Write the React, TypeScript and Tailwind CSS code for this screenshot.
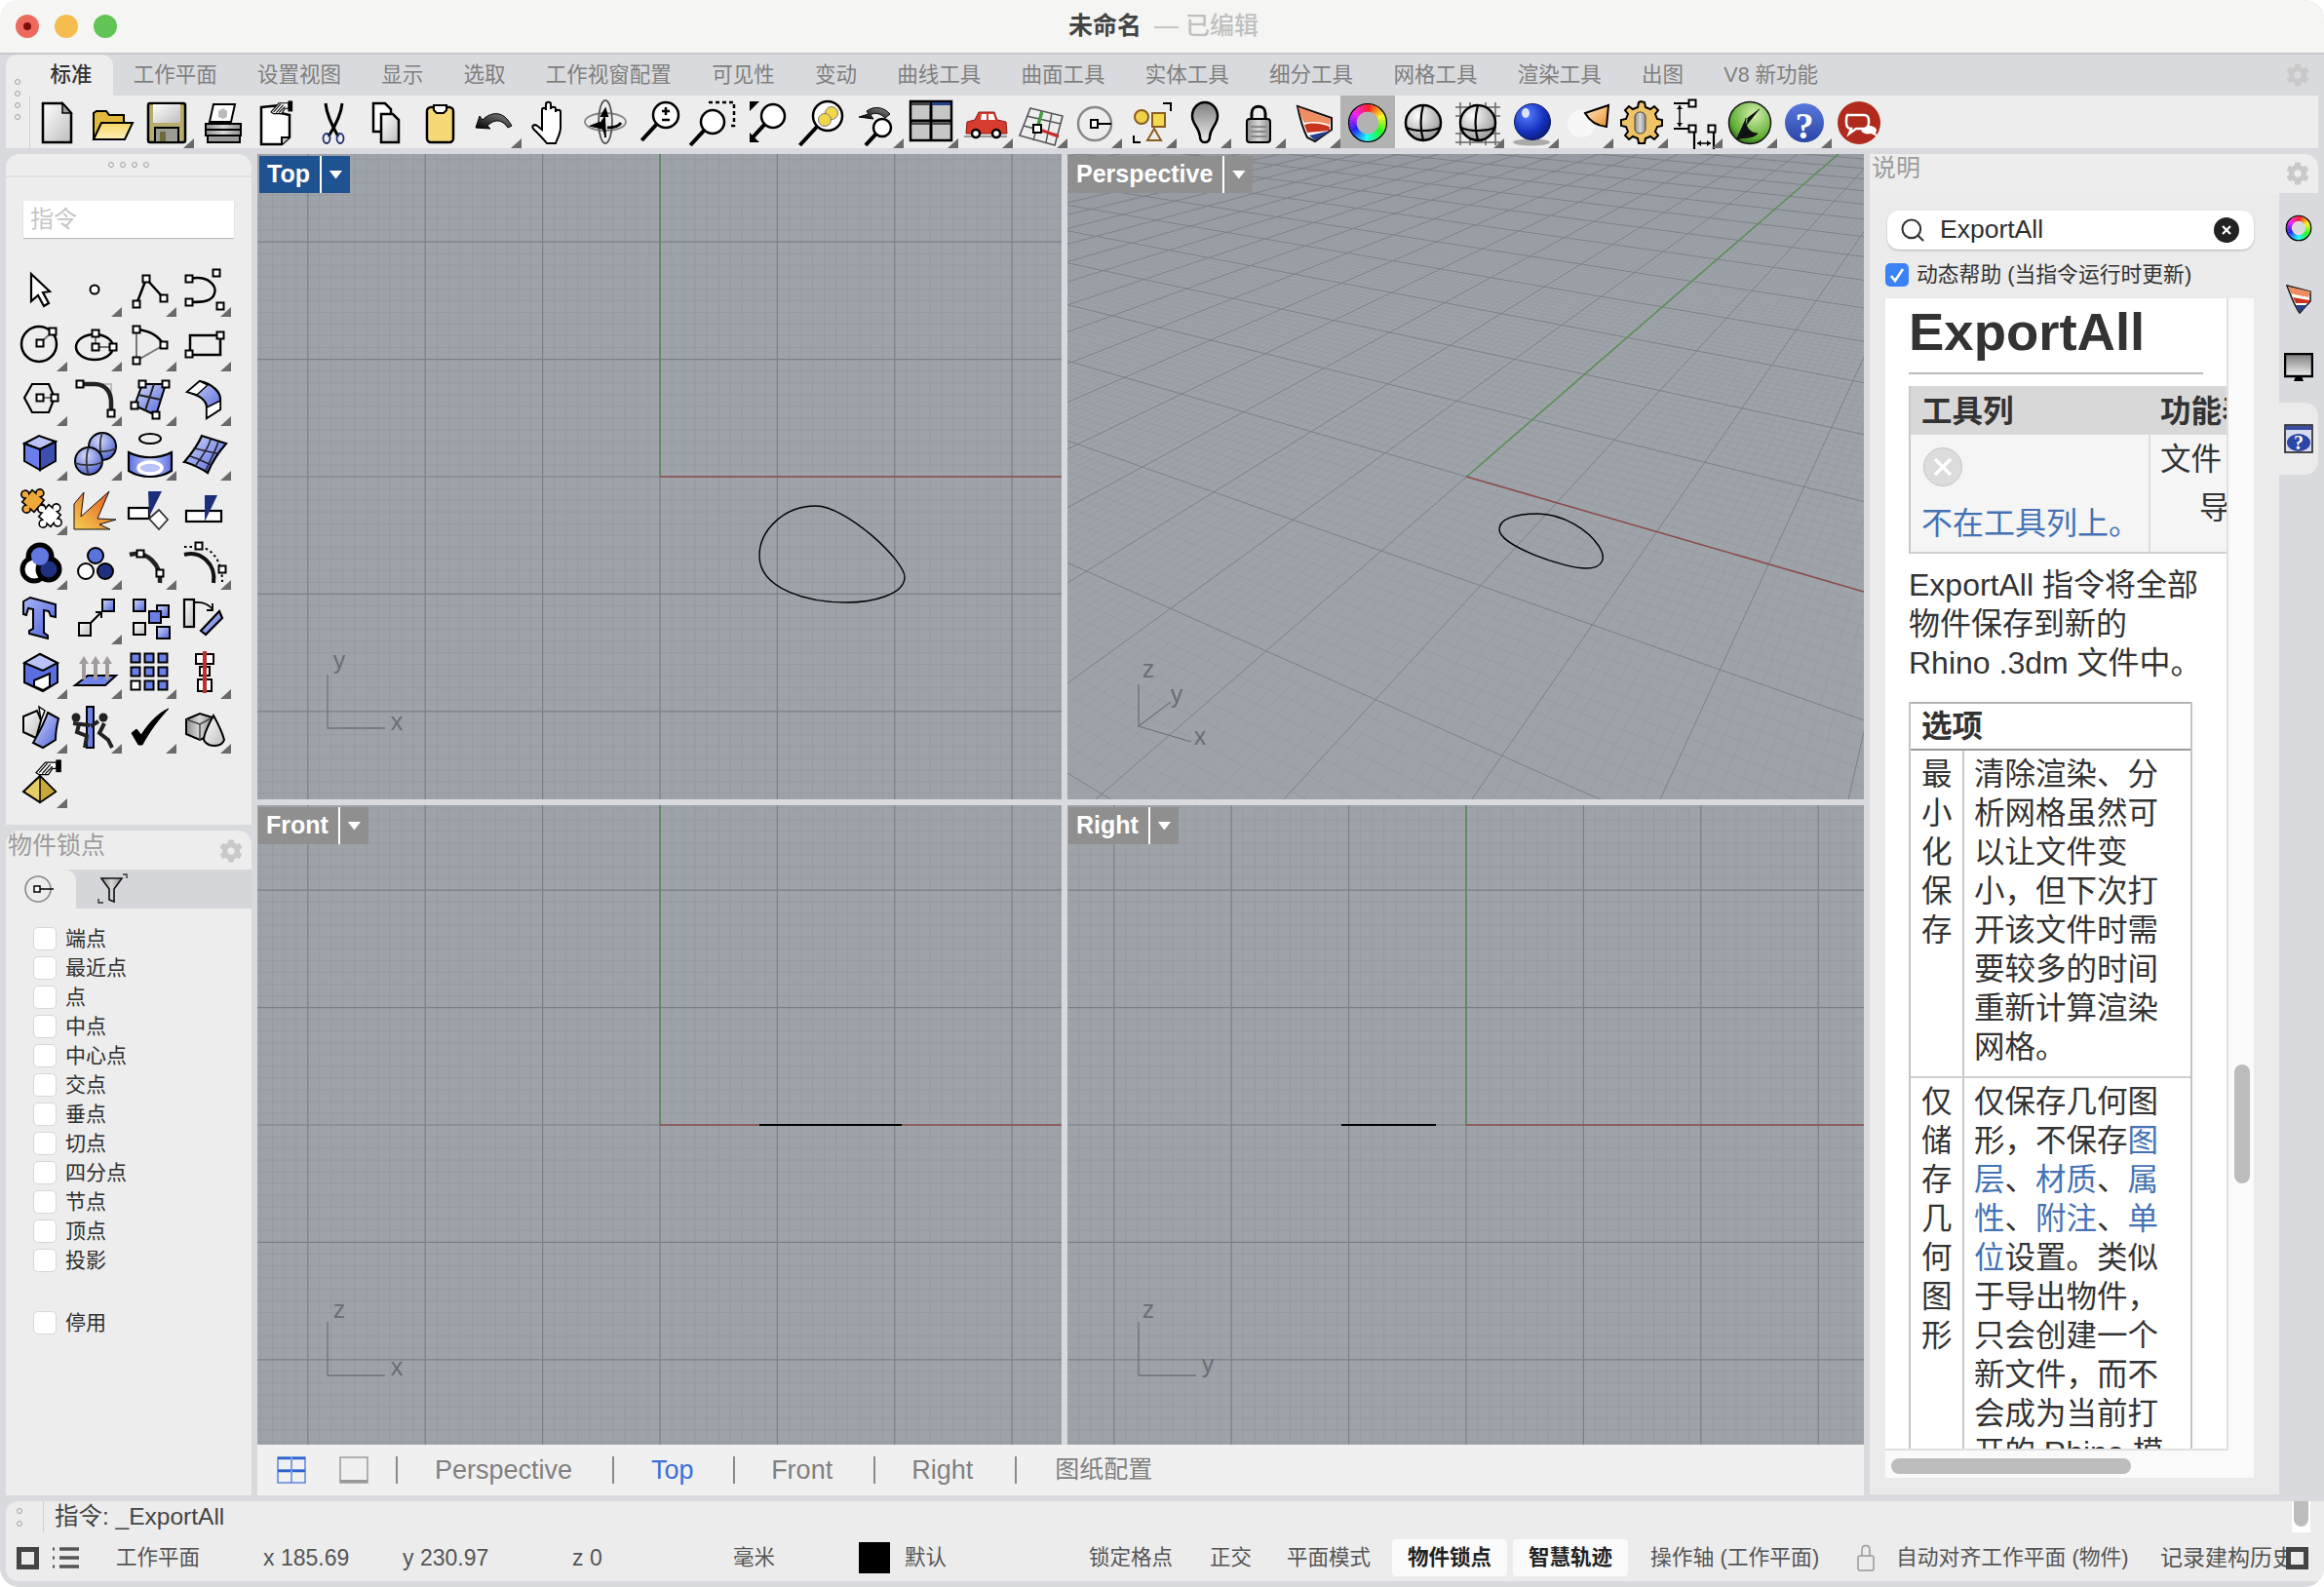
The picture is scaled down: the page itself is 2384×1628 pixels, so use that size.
import React from "react";
import { Search } from "lucide-react";
import { FaCog } from "react-icons/fa";

const S = "#000";
const H = ({ x, y, s = 7 }: { x: number; y: number; s?: number }) => (
  <rect x={x - s / 2} y={y - s / 2} width={s} height={s} fill="#fff" stroke="#000" strokeWidth="2" />
);
const Ico = ({ children, dx = 0 }: { children: React.ReactNode; dx?: number }) => (
  <svg width="48" height="48" viewBox="0 0 48 48" className="block overflow-visible"><g transform={`translate(${dx} 0)`}>{children}</g></svg>
);
const Mag = ({ x = 26, y = 20, r = 10, fill = "#fff" }: { x?: number; y?: number; r?: number; fill?: string }) => (
  <>
    <line x1={x - r * 0.7} y1={y + r * 0.7} x2={x - r * 1.9} y2={y + r * 2} stroke="#000" strokeWidth="4" />
    <circle cx={x} cy={y} r={r} fill={fill} stroke="#000" strokeWidth="2.5" />
  </>
);
const Hand = ({ t = "" }: { t?: string }) => (
  <g transform={t} stroke="#000" fill="#fff" strokeWidth="1.2">
    <path d="M0 12 L9 2 H20 V8 H16 L12 14 H3z" />
    <path d="M3 12 L11 3M6 13 L14 4M9 13 L16 6" fill="none" />
    <rect x="20" y="0" width="4" height="11" fill="#000" />
  </g>
);
const Puz = ({ cx, cy, f }: { cx: number; cy: number; f: string }) => (
  <g transform={`translate(${cx} ${cy}) rotate(40)`}>
    <path
      d="M-8 -8H-3A4 4 0 1 1 3 -8H8V-3A4 4 0 1 1 8 3V8H3A4 4 0 1 1 -3 8H-8V3A4 4 0 1 1 -8 -3Z"
      fill={f}
      stroke="#000"
      strokeWidth="1.6"
    />
  </g>
);
const Wheel = ({ cx, cy, r, w }: { cx: number; cy: number; r: number; w: number }) => {
  const segs = [];
  for (let i = 0; i < 36; i++) {
    const a0 = ((i * 10 - 90) * Math.PI) / 180;
    const a1 = (((i + 1) * 10 - 90 + 1) * Math.PI) / 180;
    segs.push(
      <path
        key={i}
        d={`M${(cx + r * Math.cos(a0)).toFixed(2)} ${(cy + r * Math.sin(a0)).toFixed(2)}L${(cx + r * Math.cos(a1)).toFixed(2)} ${(cy + r * Math.sin(a1)).toFixed(2)}`}
        stroke={`hsl(${i * 10} 95% 55%)`}
        strokeWidth={w}
        fill="none"
      />
    );
  }
  return (
    <>
      {segs}
      <circle cx={cx} cy={cy} r={r + w / 2} fill="none" stroke="#000" strokeWidth="1.2" />
    </>
  );
};
const Ball = () => (
  <>
    <circle cx="25" cy="25" r="18" fill="url(#gS)" stroke={S} strokeWidth="2.5" />
    <path d="M25 7C22 18 22 32 25 43" fill="none" stroke="#000" strokeWidth="2.2" />
    <path d="M8 30C16 34 34 34 42 30" fill="none" stroke="#000" strokeWidth="2.2" />
  </>
);

const topIcons: React.ReactNode[] = [
  <><path d="M9 5h20l9 10v30H9z" fill="url(#gW)" stroke={S} strokeWidth="2.5" /><path d="M29 5v10h9z" fill="#999" stroke={S} strokeWidth="1.5" /></>,
  <><path d="M8 42V15l3-2h10l3 4h15v8" fill="#e2b93a" stroke={S} strokeWidth="2" /><path d="M8 42l8-17h32l-8 17z" fill="url(#gY)" stroke={S} strokeWidth="2" /></>,
  <><rect x="8" y="5" width="38" height="40" rx="2" fill="#b8ad6f" stroke={S} strokeWidth="2.5" /><rect x="13" y="6" width="28" height="19" fill="url(#gW)" /><rect x="15" y="30" width="24" height="15" fill="#9c9c94" stroke={S} strokeWidth="2" /><rect x="20" y="34" width="6" height="10" fill="#6e6a3c" /></>,
  <><path d="M16 6H38L34 24H12z" fill="#fff" stroke={S} strokeWidth="2" /><path d="M21 13l5-3 4 3v6l-4 2-5-2z" fill="#bbb" /><path d="M8 26h36v6H8zM8 32h36v6H8z" fill="url(#gG)" stroke={S} strokeWidth="2" /><rect x="10" y="38" width="33" height="7" fill="#999" stroke={S} strokeWidth="2" /></>,
  <><path d="M9 9l20-2v8l9 2v23l-8 7H9z" fill="#fff" stroke={S} strokeWidth="2.5" /><path d="M30 47v-7h8" fill="#ccc" stroke={S} strokeWidth="2" /><Hand t="translate(19 3) scale(.9)" /></>,
  <><path d="M16 5c1 11 6 22 13 34M33 5C32 16 26 28 19 39" fill="none" stroke="#000" strokeWidth="3" /><ellipse cx="17" cy="41" rx="3.5" ry="5" fill="none" stroke="#1d2d6e" strokeWidth="1.8" /><ellipse cx="31" cy="41" rx="3.5" ry="5" fill="none" stroke="#1d2d6e" strokeWidth="1.8" /></>,
  <><path d="M9 5h12l6 6v23H9z" fill="#fff" stroke={S} strokeWidth="2.5" /><path d="M17 16h12l6 6v23H17z" fill="url(#gW)" stroke={S} strokeWidth="2.5" /></>,
  <><rect x="9" y="9" width="27" height="36" rx="4" fill="#f5d878" stroke={S} strokeWidth="2.5" /><path d="M16 7h13v5l-3 3h-7l-3-3z" fill="#fff" stroke={S} strokeWidth="2" /></>,
  <><path d="M3 30L7 18l3 4c8-8 20-10 28 3l2 3-4 2c-6-9-14-9-21-2l3 3z" fill="url(#gK)" stroke="#000" strokeWidth="1" /></>,
  <><path d="M18 46c-4-5-9-10-14-15-2-3 1-5 4-3l5 4V12c0-3 4-3 4 0V6c0-3 5-3 5 0v5c0-3 5-3 5 0v3c0-3 5-3 5 0v16c0 6-3 10-5 16z" fill="#fff" stroke={S} strokeWidth="2" /></>,
  <><ellipse cx="22" cy="24" rx="21" ry="9" fill="none" stroke="#888" strokeWidth="1.8" /><ellipse cx="22" cy="24" rx="7" ry="22" fill="none" stroke="#555" strokeWidth="1.8" /><path d="M17 26l4-6 1 20M24 18l-2-7-4 7zM8 28l12 3-4-6z" fill="#000" stroke="#000" strokeWidth="2" /><path d="M24 30c8 0 12-2 14-5" fill="none" stroke="#000" strokeWidth="3" /></>,
  <><Mag x={28} y={17} r={13} /><path d="M28 9v8M24 13h8M24 22h8" stroke="#000" strokeWidth="2.5" /></>,
  <><path d="M16 4h26v24h-4" fill="none" stroke="#000" strokeWidth="2.5" strokeDasharray="4 3" /><Mag x={20} y={24} r={12} /></>,
  <><path d="M3 3h10L3 13zM3 45h10L3 35z" fill="#000" /><Mag x={27} y={18} r={12} /></>,
  <><Mag x={26} y={18} r={15} /><circle cx="30" cy="15" r="6.5" fill="#f0d84a" stroke="#777" /><circle cx="23" cy="22" r="6.5" fill="#f0d84a" stroke="#777" /></>,
  <><path d="M2 19l10-3-2-3c8-6 18-4 24 3l-5 4c-5-5-11-6-15-3l3 4z" fill="url(#gK)" stroke="#000" /><Mag x={26} y={30} r={9} /></>,
  <><rect x="3" y="3" width="42" height="40" fill="#c6c6c6" stroke={S} strokeWidth="2.5" /><path d="M24 3v40M3 23h42" stroke="#000" strokeWidth="3" /><rect x="4" y="4" width="19" height="3" fill="#444" /><rect x="25" y="4" width="19" height="3" fill="#23408f" /><rect x="4" y="25" width="19" height="2" fill="#444" /><rect x="25" y="25" width="19" height="2" fill="#444" /></>,
  <><rect x="5" y="38" width="44" height="2" fill="#999" /><path d="M8 24l8-2 4-8h16l3 8 9 2 1 12H7z" fill="#d83c2e" stroke="#8a1c14" /><path d="M23 16h5v6h-6zM30 16h5l2 6h-7z" fill="#fff" /><circle cx="17" cy="36" r="4" fill="#fff" stroke="#000" strokeWidth="2.5" /><circle cx="38" cy="36" r="4" fill="#fff" stroke="#000" strokeWidth="2.5" /></>,
  <><path d="M15 10L48 18 40 48 4 38z" fill="none" stroke="#555" strokeWidth="1.6" /><path d="M11 18l35 8M8 28l34 9M26 13L18 43M37 15l-6 30" stroke="#555" strokeWidth="1.4" /><path d="M22 31l5-17" stroke="#3ea03e" strokeWidth="3" /><path d="M22 31l22 8" stroke="#c82c2c" strokeWidth="3" /><H x={22} y={31} s={8} /></>,
  <><circle cx="21" cy="26" r="17" fill="none" stroke="#888" strokeWidth="2.5" /><rect x="17" y="22" width="7" height="8" fill="#fff" stroke="#000" strokeWidth="2" /><line x1="24" y1="26" x2="38" y2="26" stroke="#000" strokeWidth="2" /></>,
  <><path d="M38 5h8v8" fill="none" stroke="#000" strokeWidth="2" /><path d="M8 38v7h7" fill="none" stroke="#000" strokeWidth="2" /><circle cx="16" cy="19" r="7" fill="#f0d24a" stroke="#8a5d1e" strokeWidth="2" /><rect x="27" y="15" width="13" height="14" fill="#f3d94e" stroke="#8a5d1e" strokeWidth="2" /><path d="M22 43l7-12 7 12z" fill="none" stroke="#8a5d1e" strokeWidth="2" /></>,
  <><path d="M24 4c8 0 13 7 13 14 0 9-7 11-8 21 0 4-2 6-5 6s-5-2-5-6c-1-10-8-12-8-21 0-7 5-14 13-14z" fill="url(#gG2)" stroke={S} strokeWidth="2.5" /></>,
  <><path d="M17 22v-7c0-9 14-9 14 0v7" fill="none" stroke="#000" strokeWidth="3" /><rect x="12" y="21" width="24" height="24" rx="3" fill="url(#gG)" stroke={S} strokeWidth="2" /><path d="M16 29h16M16 34h16M16 39h16" stroke="#888" strokeWidth="2" /></>,
  <><path d="M8 8L43 20V32L26 44 18 40C12 28 10 18 8 8z" fill="#fff" stroke="#111" strokeWidth="2" /><path d="M9 9L42 21 41 27C33 24 23 23 15 25 12 20 10 14 9 9z" fill="#ef8d63" /><path d="M15 27C25 24 33 26 41 29V33L18 35z" fill="#c9341f" /><path d="M20 38L42 33 26 43z" fill="#26408f" /></>,
  <Wheel cx={24} cy={25} r={15.5} w={8} />,
  <Ball />,
  <><path d="M7 4v44M17 4v44M33 4v44M43 4v44M2 9h46M2 18h46M2 36h46M2 45h46" stroke="#666" strokeWidth="1.5" /><Ball /></>,
  <><ellipse cx="24" cy="45" rx="19" ry="3.5" fill="#aaa" /><circle cx="25" cy="24" r="18.5" fill="url(#gBall)" stroke="#0a1a66" /><ellipse cx="18" cy="15" rx="4" ry="5" fill="#fff" opacity=".8" /></>,
  <><circle cx="19" cy="26" r="14" fill="#fff" opacity=".55" /><path d="M23 15L47 7 45 29C36 28 28 24 23 15z" fill="url(#gC)" stroke={S} strokeWidth="2" /></>,
  <><path d="M24 3l4 1 1 5 5 2 4-3 4 4-3 4 2 5 5 1v6l-5 1-2 5 3 4-4 4-4-3-5 2-1 5h-6l-1-5-5-2-4 3-4-4 3-4-2-5-5-1v-6l5-1 2-5-3-4 4-4 4 3 5-2 1-5z" fill="#efc467" stroke={S} strokeWidth="2" /><rect x="18" y="14" width="11" height="22" rx="5" fill="url(#gG)" stroke="#444" /></>,
  <><path d="M2 5h18M2 31h18M23 31v21M43 33v19" stroke="#000" strokeWidth="2.2" /><H x={21} y={5} /><H x={21} y={31} /><H x={41} y={31} /><path d="M8 7v22M26 46h14" stroke="#000" strokeWidth="1.5" /><path d="M8 7l-3 4h6zM8 29l-3-4h6zM26 46l4-3v6zM40 46l-4-3v6z" fill="#000" /></>,
  <><circle cx="24" cy="25" r="21.5" fill="url(#gE)" stroke="#111" strokeWidth="1.5" /><path d="M14 36c6-3 8-12 8-16l12-9M10 42c8-3 16 0 22-6-8 0-14-8-12-16" fill="#111" stroke="#111" /></>,
  <><circle cx="24" cy="25" r="20" fill="url(#gH)" /><text x="24" y="41" textAnchor="middle" fontFamily="Liberation Serif" fontSize="38" fontWeight="700" fill="#fff">?</text></>,
  <><circle cx="24" cy="25" r="22" fill="#b02a1d" /><path d="M12 17h17c4 0 5 3 5 6v2c0 3-2 6-6 6h-7l-7 5 2-5c-4 0-5-3-5-6v-3c0-3 1-5 1-5z" fill="none" stroke="#fff" strokeWidth="2.5" /><path d="M33 28c6 0 9 2 9 5l-1 2 2 4-7-3c-4 1-8 0-10-3z" fill="#fff" /></>,
];
const topDx = [0, -3, -3, 0, 0, 3, 3, 2, 2, 4, 4, 4, 4, 3, 4, 4, 0, -3, -1, 3, 0, 1];
const topTri = [2, 8, 15, 16, 17, 18, 19, 20, 21, 22, 23, 26, 27, 28, 29, 30, 31, 32];

const sideIcons: [React.ReactNode, boolean][] = [
  [<path d="M19 12L38 30 31 31 37 42 32 45 26 34 19 40z" fill="#fff" stroke={S} strokeWidth="2.2" />, false],
  [<circle cx="28" cy="28" r="4.5" fill="#fff" stroke={S} strokeWidth="2" />, true],
  [<><path d="M15 43L25 17 43 37" fill="none" stroke="#000" strokeWidth="2.5" /><H x={25} y={17} /><H x={15} y={43} /><H x={43} y={37} /></>, true],
  [<><path d="M14 17C32 13 42 24 39 32 37 40 28 41 14 41" fill="none" stroke="#000" strokeWidth="2.5" /><H x={13} y={17} /><H x={41} y={11} /><H x={13} y={41} /><H x={45} y={45} /></>, true],
  [<><circle cx="27" cy="28" r="18" fill="none" stroke="#000" strokeWidth="2.5" /><line x1="28" y1="27" x2="41" y2="15" stroke="#777" strokeWidth="2" /><H x={28} y={27} /><H x={41} y={15} /></>, true],
  [<><ellipse cx="28" cy="31" rx="19" ry="13" fill="none" stroke="#000" strokeWidth="2.5" /><path d="M29 17v14h18" fill="none" stroke="#777" strokeWidth="2" /><H x={29} y={17} /><H x={29} y={31} /><H x={47} y={31} /></>, true],
  [<><path d="M15 13v32L43 29" fill="none" stroke="#777" strokeWidth="2" /><path d="M15 13C28 14 38 20 43 29" fill="none" stroke="#000" strokeWidth="2.5" /><H x={15} y={13} /><H x={43} y={29} /><H x={15} y={45} /></>, true],
  [<><rect x="14" y="19" width="31" height="20" fill="none" stroke="#000" strokeWidth="2.5" /><H x={13} y={38} /><H x={45} y={19} /></>, true],
  [<><path d="M12 27L20 13H37L43 27 37 42H20z" fill="none" stroke="#000" strokeWidth="2.2" /><line x1="28" y1="27" x2="43" y2="27" stroke="#777" strokeWidth="2" /><H x={28} y={27} /><H x={43} y={27} /></>, true],
  [<><path d="M13 13H45V43" fill="none" stroke="#aaa" strokeWidth="1.5" /><path d="M13 13H28C40 13 45 22 45 32V43" fill="none" stroke="#222" strokeWidth="4.5" /><H x={13} y={13} /><H x={45} y={43} /></>, true],
  [<><path d="M21 13H45L35 45 13 35z" fill="url(#gB)" stroke={S} strokeWidth="2" /><path d="M17 24L40 29M33 13L24 40" stroke="#222" strokeWidth="2" /><H x={21} y={13} /><H x={45} y={13} /><H x={35} y={45} /><H x={13} y={35} /></>, true],
  [<><path d="M11 21L24 10C38 13 45 22 45 28V39L31 48V37C31 29 22 24 11 21z" fill="url(#gB)" stroke={S} strokeWidth="2.2" /><path d="M11 21L24 10 32 14 21 24z" fill="#fff" stroke={S} strokeWidth="1.5" /><path d="M31 37L45 30V39L31 48z" fill="#fff" stroke={S} strokeWidth="1.5" /></>, true],
  [<><path d="M12 18L27 10 44 16 28 24z" fill="#b9c3f7" stroke={S} strokeWidth="2" /><path d="M12 18L28 24V45L12 36z" fill="#6a7de8" stroke={S} strokeWidth="2" /><path d="M28 24L44 16V36L28 45z" fill="#3c4fb0" stroke={S} strokeWidth="2" /></>, true],
  [<><circle cx="36" cy="21" r="14" fill="url(#gR)" stroke={S} strokeWidth="2" /><path d="M36 7C33 14 33 28 36 35M22 24C30 27 42 27 50 23" fill="none" stroke="#333" strokeWidth="1.8" /><circle cx="22" cy="36" r="14" fill="url(#gR)" stroke={S} strokeWidth="2" /><path d="M22 22C19 29 19 43 22 50M8 38C16 41 28 41 36 37" fill="none" stroke="#333" strokeWidth="1.8" /></>, true],
  [<><ellipse cx="29" cy="13" rx="11" ry="5" fill="none" stroke={S} strokeWidth="2" /><path d="M7 27C20 34 38 34 51 27V46C38 54 20 54 7 46z" fill="url(#gB2)" stroke={S} strokeWidth="2.2" /><ellipse cx="29" cy="43" rx="12" ry="6" fill="#b9c3f7" stroke="#fff" strokeWidth="3.5" /></>, true],
  [<><path d="M8 37C14 30 22 20 26 10L51 18C44 26 36 38 32 48 26 44 14 38 8 37z" fill="url(#gB)" stroke={S} strokeWidth="2.2" /><path d="M17 23C26 24 36 28 44 28M14 31C24 34 30 38 36 40M35 14C32 24 26 32 20 40M43 16C40 26 34 36 30 46" fill="none" stroke="#223" strokeWidth="1.6" /></>, true],
  [<><Puz cx={21} cy={21} f="#efa83a" /><Puz cx={38} cy={36} f="#fff" /></>, true],
  [<path d="M7 50V24L17 12 14 37 43 11 31 39 50 40 33 45 44 50z" fill="url(#gF)" stroke="#111" strokeWidth="1" />, false],
  [<><rect x="7" y="28" width="21" height="11" fill="#fff" stroke={S} strokeWidth="2.2" /><path d="M27 11H41L28 37z" fill="#1c2d7a" /><path d="M28 39L38 30 47 40 38 50z" fill="#fff" stroke="#333" strokeWidth="1.8" /></>, false],
  [<><rect x="10" y="31" width="36" height="11" fill="#fff" stroke={S} strokeWidth="2.2" /><path d="M29 15H42L29 42z" fill="#1c2d7a" /></>, false],
  [<><circle cx="28" cy="22" r="12" fill="#5a72dc" stroke={S} strokeWidth="5" /><circle cx="22" cy="35" r="12" fill="#fff" stroke={S} strokeWidth="5" /><circle cx="37" cy="35" r="11" fill="#1f3080" stroke={S} strokeWidth="5" /><circle cx="28" cy="22" r="9" fill="#6078e0" /></>, true],
  [<><circle cx="29" cy="21" r="8" fill="#5a72dc" stroke={S} strokeWidth="2" /><circle cx="19" cy="37" r="8" fill="#fff" stroke={S} strokeWidth="2" /><circle cx="39" cy="37" r="8" fill="#1f3080" stroke={S} strokeWidth="2" /></>, true],
  [<><path d="M8 20C25 15 41 30 39 49" fill="none" stroke="#222" strokeWidth="4.5" /><H x={19} y={19} /><H x={39} y={39} /></>, true],
  [<><path d="M8 20C25 15 41 30 38 49" fill="none" stroke="#111" strokeWidth="4" /><path d="M8 12H23C36 13 47 26 47 48" fill="none" stroke="#000" strokeWidth="2" strokeDasharray="2.5 3" /><H x={23} y={11} /><H x={47} y={35} /></>, true],
  [<><path d="M11 12L18 8 44 15V28L39 27 37 22 32 21V44L36 47V50L17 45V42L21 40V20L16 19 14 26 11 25Z" fill="url(#gB3)" stroke={S} strokeWidth="2" /></>, false],
  [<><rect x="12" y="34" width="12" height="13" fill="url(#gW)" stroke={S} strokeWidth="2" /><rect x="36" y="10" width="12" height="12" fill="url(#gB)" stroke={S} strokeWidth="2" /><path d="M24 34L35 23M29 23H35V29" fill="none" stroke="#000" strokeWidth="2" /></>, true],
  [<><rect x="12" y="10" width="12" height="12" fill="url(#gB)" stroke={S} strokeWidth="2" /><rect x="36" y="16" width="12" height="12" fill="url(#gB)" stroke={S} strokeWidth="2" /><rect x="28" y="22" width="12" height="12" fill="#6a80e8" stroke={S} strokeWidth="2" /><rect x="12" y="34" width="12" height="12" fill="url(#gW)" stroke={S} strokeWidth="2" /><rect x="36" y="38" width="13" height="12" fill="url(#gB)" stroke={S} strokeWidth="2" /></>, false],
  [<><rect x="8" y="10" width="10" height="28" fill="url(#gW)" stroke={S} strokeWidth="2.2" /><path d="M28 43L47 23 50 30 33 47z" fill="url(#gB)" stroke={S} strokeWidth="2.2" transform="translate(-3 -1)" /><path d="M19 13C27 12 33 15 37 20M37 14V21H31" fill="none" stroke="#000" strokeWidth="1.8" /></>, false],
  [<><path d="M12 19L28 10 46 19 V39 L31 48 12 39z" fill="#5a6ee0" stroke={S} strokeWidth="2" /><path d="M12 19L28 10 46 19 31 27z" fill="#b9c3f7" stroke={S} strokeWidth="2" /><path d="M22 37L38 30V43L31 47 22 43z" fill="#fff" stroke={S} strokeWidth="2" /></>, true],
  [<><path d="M8 42L21 32H50L39 42z" fill="#6f83e8" stroke={S} strokeWidth="2" /><path d="M15 36V20H12L17 12 22 20H19V36zM27 36V20H24L29 12 34 20H31V36zM39 36V20H36L41 12 46 20H43V36z" fill="#a19c9c" /></>, true],
  [<>{[14, 28, 42].map((y) => [14, 28, 42].map((x) => <rect key={`${x}${y}`} x={x - 4.5} y={y - 4.5} width="9" height="9" fill={x === 14 && y === 42 ? "#fff" : "#6a80e8"} stroke={S} strokeWidth="2" />))}</>, true],
  [<><rect x="20" y="10" width="18" height="10" fill="#fff" stroke={S} strokeWidth="2" /><rect x="24" y="23" width="10" height="9" fill="#fff" stroke={S} strokeWidth="2" /><rect x="22" y="36" width="14" height="12" fill="#fff" stroke={S} strokeWidth="2" /><rect x="27" y="7" width="4" height="43" fill="#b8322e" /></>, true],
  [<><path d="M11 18L25 12 29 22 24 40 11 34z" fill="url(#gW)" stroke={S} strokeWidth="2" /><path d="M27 8L33 12 29 22z" fill="#fff" stroke={S} strokeWidth="1.5" /><path d="M36 14L47 20C45 28 44 36 44 42L31 50 21 45C26 36 32 26 36 14z" fill="url(#gB)" stroke={S} strokeWidth="2" /></>, true],
  [<><rect x="20" y="8" width="7" height="42" fill="#6a80e8" stroke={S} strokeWidth="2" /><circle cx="9" cy="19" r="4.5" fill="#222" /><circle cx="37" cy="19" r="4.5" fill="#222" /><path d="M6 25L23 27M12 26L10 34 20 38 18 50M32 23L24 28M38 25L33 35 42 42 46 50" fill="none" stroke="#222" strokeWidth="4" /></>, true],
  [<path d="M10 35L15 31 20 37C27 25 38 14 48 10 38 20 28 34 21 47H17z" fill="#000" stroke="#000" strokeWidth="1" />, true],
  [<><path d="M10 21L24 15 37 19V36L24 42 10 36z" fill="url(#gG)" stroke={S} strokeWidth="2" /><path d="M10 21L24 26 37 19M24 26V42" fill="none" stroke="#444" strokeWidth="1.5" /><path d="M38 17C32 28 28 38 28 42 32 50 46 50 49 42 47 34 43 26 38 17z" fill="url(#gW)" stroke={S} strokeWidth="2" /></>, true],
  [<><Hand t="translate(24 7) scale(1.05)" /><path d="M28 23L44 39 28 50 11 39z" fill="#e8cc68" stroke={S} strokeWidth="2" /><path d="M28 23V50L44 39z" fill="#c9a83a" stroke={S} strokeWidth="1.5" /></>, true],
];

const snaps = ["端点", "最近点", "点", "中点", "中心点", "交点", "垂点", "切点", "四分点", "节点", "顶点", "投影"];

const Tri = () => (
  <span className="absolute right-0 bottom-0 block h-[10px] w-[11px] bg-[#6a6a6a] [clip-path:polygon(100%_0,100%_100%,0_100%)]" />
);
const Check = ({ label }: { label: string }) => (
  <div className="flex h-[30px] items-center text-[21px] text-[#2e2e2e]">
    <span className="mr-[9px] block h-[24px] w-[24px] rounded-[5px] border border-[#d6d6d6] bg-white" />
    {label}
  </div>
);
const Gear = () => <FaCog size={24} color="#c9c9c9" />;

function Ortho({ x, y, w, h, ox, oy, greenTo, redFrom, redTo }: { x: number; y: number; w: number; h: number; ox: number; oy: number; greenTo: number; redFrom: number; redTo: number }) {
  const st = 12.04;
  let minor = "";
  let major = "";
  for (let i = -80; i <= 80; i++) {
    const px = ox + i * st;
    const py = oy + i * st;
    const m = i % 10 === 0;
    if (px >= x && px <= x + w) {
      const s = `M${px.toFixed(1)} ${y}V${y + h}`;
      if (m) major += s; else minor += s;
    }
    if (py >= y && py <= y + h) {
      const s = `M${x} ${py.toFixed(1)}H${x + w}`;
      if (m) major += s; else minor += s;
    }
  }
  return (
    <>
      <path d={minor} stroke="#969ba1" strokeWidth="1" fill="none" />
      <path d={major} stroke="#7b8086" strokeWidth="1.2" fill="none" />
      <line x1={ox} y1={y} x2={ox} y2={greenTo} stroke="#4f8a4f" strokeWidth="1.3" />
      <line x1={redFrom} y1={oy} x2={redTo} y2={oy} stroke="#8f4c4c" strokeWidth="1.6" />
    </>
  );
}

function perspective() {
  const O = [1504.5, 489];
  const VR = [-250, -20];
  const VG = [2090, -20];
  const k = 0.05;
  const m = 0.13;
  const P = (u: number, v: number) => {
    const w = 1 - k * u + m * v;
    return [((O[0] - u * k * VR[0] + v * m * VG[0]) / w).toFixed(1), ((O[1] - u * k * VR[1] + v * m * VG[1]) / w).toFixed(1)];
  };
  let minor = "";
  let major = "";
  for (let i = -600; i <= 195; i++) {
    const u = i / 10;
    const v0 = (0.05 - 1 + k * u) / m;
    const a = P(u, v0);
    const b = P(u, 200);
    const s = `M${a[0]} ${a[1]}L${b[0]} ${b[1]}`;
    if (i % 10 === 0) major += s; else minor += s;
  }
  for (let i = -500; i <= 500; i++) {
    const v = i / 10;
    const u1 = (1 + m * v - 0.05) / k;
    const a = P(-300, v);
    const b = P(u1, v);
    const s = `M${a[0]} ${a[1]}L${b[0]} ${b[1]}`;
    if (i % 10 === 0) major += s; else minor += s;
  }
  return { minor, major };
}

const Tag = ({ label, active }: { label: string; active?: boolean }) => (
  <div className={active ? "absolute top-[2px] left-[2px] flex h-[38px] items-center bg-[#1f5291] text-[25px] font-bold text-white" : "absolute top-[2px] left-[1px] flex h-[38px] items-center bg-[#8f8f8f] text-[25px] font-bold text-white"}>
    <span className="pr-[10px] pl-[8px]">{label}</span>
    <span className="flex h-[38px] w-[31px] items-center justify-center border-l-2 border-white">
      <span className="block h-[9px] w-[14px] bg-white [clip-path:polygon(0_0,100%_0,50%_100%)]" />
    </span>
  </div>
);

const AxisL = ({ x, y, lx, ly, l1, l2 }: { x: number; y: number; lx: [number, number]; ly: [number, number]; l1: string; l2: string }) => (
  <>
    <path d={`M${x} ${y - 55}V${y}H${x + 59}`} fill="none" stroke="#6e7277" strokeWidth="1.3" />
    <text x={lx[0]} y={lx[1]} fontSize="25" fill="#6a6e73" textAnchor="middle" fontFamily="Liberation Sans">{l1}</text>
    <text x={ly[0]} y={ly[1]} fontSize="25" fill="#6a6e73" textAnchor="middle" fontFamily="Liberation Sans">{l2}</text>
  </>
);

export default function App() {
  const p = perspective();
  return (
    <div className="h-[1628px] w-[2384px] overflow-hidden bg-white [font-family:'Liberation_Sans','Noto_Sans_CJK_SC',sans-serif]">
      <svg width="0" height="0" className="absolute">
        <defs>
          <linearGradient id="gW" x1="0" y1="0" x2="1" y2="1"><stop offset="0" stopColor="#fff" /><stop offset="1" stopColor="#bdbdbd" /></linearGradient>
          <linearGradient id="gY" x1="0" y1="0" x2="0" y2="1"><stop offset="0" stopColor="#f6d466" /><stop offset="1" stopColor="#fff0b8" /></linearGradient>
          <linearGradient id="gG" x1="0" y1="0" x2="1" y2="0"><stop offset="0" stopColor="#8c8c8c" /><stop offset=".5" stopColor="#d8d8d8" /><stop offset="1" stopColor="#8c8c8c" /></linearGradient>
          <linearGradient id="gG2" x1="0" y1="0" x2="0" y2="1"><stop offset="0" stopColor="#7c7c7c" /><stop offset="1" stopColor="#f0f0f0" /></linearGradient>
          <linearGradient id="gK" x1="0" y1="1" x2="1" y2="0"><stop offset="0" stopColor="#000" /><stop offset="1" stopColor="#888" /></linearGradient>
          <linearGradient id="gB" x1="0" y1="0" x2="1" y2="1"><stop offset="0" stopColor="#d4daf9" /><stop offset="1" stopColor="#4d62da" /></linearGradient>
          <linearGradient id="gB2" x1="0" y1="0" x2="1" y2="0"><stop offset="0" stopColor="#5e72e4" /><stop offset=".5" stopColor="#c5cdf8" /><stop offset="1" stopColor="#5e72e4" /></linearGradient>
          <linearGradient id="gB3" x1="0" y1="0" x2="1" y2="1"><stop offset="0" stopColor="#a8b5f7" /><stop offset="1" stopColor="#4a5fd8" /></linearGradient>
          <radialGradient id="gR" cx=".4" cy=".3" r=".8"><stop offset="0" stopColor="#d6dcfa" /><stop offset="1" stopColor="#3e54c8" /></radialGradient>
          <linearGradient id="gF" x1="0" y1="1" x2="1" y2="0"><stop offset="0" stopColor="#f6cf52" /><stop offset="1" stopColor="#e0501c" /></linearGradient>
          <radialGradient id="gS" cx=".35" cy=".3" r=".8"><stop offset="0" stopColor="#fff" /><stop offset="1" stopColor="#8f8f8f" /></radialGradient>
          <radialGradient id="gBall" cx=".35" cy=".3" r=".8"><stop offset="0" stopColor="#5a80ff" /><stop offset=".6" stopColor="#1632c0" /><stop offset="1" stopColor="#0a1866" /></radialGradient>
          <linearGradient id="gC" x1="0" y1="0" x2="1" y2="1"><stop offset="0" stopColor="#fff1cf" /><stop offset="1" stopColor="#ec8c28" /></linearGradient>
          <radialGradient id="gE" cx=".6" cy=".3" r=".8"><stop offset="0" stopColor="#d6f0b0" /><stop offset=".7" stopColor="#5fae35" /><stop offset="1" stopColor="#1c4a10" /></radialGradient>
          <linearGradient id="gH" x1="0" y1="0" x2="0" y2="1"><stop offset="0" stopColor="#5a78dc" /><stop offset="1" stopColor="#2a46a6" /></linearGradient>
        </defs>
      </svg>
      <div className="flex h-[1628px] w-[2384px] flex-col overflow-hidden rounded-[20px] bg-[#d9dade]">
        {/* title */}
        <div className="flex h-[56px] shrink-0 items-center border-b-2 border-[#c9c9c9] bg-[#f5f5f3] pl-[16px]">
          <span className="relative mr-[16px] block h-[24px] w-[24px] rounded-full bg-[#ee6a5f]">
            <span className="absolute top-[8px] left-[8px] block h-[8px] w-[8px] rounded-full bg-[#7a0f0a]" />
          </span>
          <span className="mr-[16px] block h-[24px] w-[24px] rounded-full bg-[#f5bd4f]" />
          <span className="block h-[24px] w-[24px] rounded-full bg-[#61c454]" />
          <span className="ml-[976px] text-[25px] font-bold text-[#444]">未命名</span>
          <span className="ml-[13px] text-[25px] font-medium text-[#c0c0c0]">— 已编辑</span>
        </div>
        {/* toolbar */}
        <div className="flex h-[96px] shrink-0 pl-[6px]">
          <div className="flex w-[25px] flex-col items-center gap-[6px] rounded-tl-[12px] border-r border-[#d0d0d0] bg-[#ededed] pt-[25px]">
            {[0, 1, 2, 3].map((i) => (
              <span key={i} className="block h-[6px] w-[6px] rounded-full border border-[#a0a0a0]" />
            ))}
          </div>
          <div className="flex min-w-0 flex-1 flex-col pr-[6px]">
            <div className="relative flex h-[42px] items-center text-[21.5px] text-[#7f7f7f]">
              <span className="-ml-[1px] flex h-[42px] w-[86px] items-center justify-center rounded-tr-[12px] bg-[#ededed] font-medium text-[#333]">标准</span>
              {["工作平面", "设置视图", "显示", "选取", "工作视窗配置", "可见性", "变动", "曲线工具", "曲面工具", "实体工具", "细分工具", "网格工具", "渲染工具", "出图", "V8 新功能"].map((t) => (
                <span key={t} className="px-[20.65px] whitespace-nowrap">{t}</span>
              ))}
              <span className="ml-auto mr-[9px] flex"><Gear /></span>
            </div>
            <div className="flex h-[54px] bg-[#ededed]">
              {topIcons.map((ic, i) => (
                <div key={i} className={i === 24 ? "relative flex h-[54px] w-[56px] items-center justify-center bg-[#b2b2b2]" : "relative flex h-[54px] w-[56px] items-center justify-center"}>
                  <Ico dx={topDx[i] ?? 0}>{ic}</Ico>
                  {topTri.includes(i) && <Tri />}
                </div>
              ))}
            </div>
          </div>
        </div>
        {/* main */}
        <div className="mt-[6px] flex h-[1376px] shrink-0 pl-[6px]">
          {/* left */}
          <div className="flex w-[252px] shrink-0 flex-col">
            <div className="h-[688px] rounded-t-[14px] bg-[#ededed]">
              <div className="flex h-[24px] items-center justify-center gap-[6px] border-b-2 border-[#e0e0e0]">
                {[0, 1, 2, 3].map((i) => (
                  <span key={i} className="block h-[6px] w-[6px] rounded-full border border-[#a0a0a0]" />
                ))}
              </div>
              <div className="mx-[18px] mt-[24px] flex h-[38px] items-center bg-white pl-[7px] text-[24px] text-[#c6c6c6] shadow-[0_1px_1px_#bbb]">指令</div>
              <div className="mt-[25px] ml-[7px] grid grid-cols-[repeat(4,56px)] auto-rows-[56px]">
                {sideIcons.map(([ic, t], i) => (
                  <div key={i} className="relative">
                    <div className="absolute top-0 left-0"><Ico>{ic}</Ico></div>
                    {t && <Tri />}
                  </div>
                ))}
              </div>
            </div>
            <div className="mt-[6px] flex h-[682px] flex-col rounded-t-[14px] bg-[#ededed]">
              <div className="flex h-[40px] shrink-0 items-start justify-between pr-[9px] pl-[2px] text-[25px] leading-[30px] text-[#9c9c9c]">
                <span>物件锁点</span>
                <span className="mt-[9px]"><Gear /></span>
              </div>
              <div className="flex h-[40px] shrink-0 bg-[#d5d6da]">
                <div className="flex w-[72px] items-center justify-center rounded-tr-[12px] bg-[#ededed] pr-[2px]">
                  <svg width="34" height="34" viewBox="0 0 34 34"><circle cx="15" cy="17" r="13" fill="none" stroke="#888" strokeWidth="1.6" /><rect x="11" y="14" width="6" height="6" fill="#fff" stroke="#000" strokeWidth="1.5" /><line x1="17" y1="17" x2="31" y2="17" stroke="#000" strokeWidth="1.5" /></svg>
                </div>
                <div className="ml-[20px] flex items-center">
                  <svg width="34" height="34" viewBox="0 0 34 34"><path d="M28 2h4v4M3 27v4h5" fill="none" stroke="#333" strokeWidth="1.4" /><path d="M6 6H27L19 17V30L14 28V17z" fill="url(#gG)" stroke="#111" strokeWidth="1.6" /></svg>
                </div>
              </div>
              <div className="pt-[16px] pl-[28px]">
                <div className="flex flex-col">
                  {snaps.map((s) => <Check key={s} label={s} />)}
                </div>
                <div className="mt-[34px]"><Check label="停用" /></div>
              </div>
            </div>
          </div>
          {/* center */}
          <div className="ml-[6px] flex w-[1648px] shrink-0 flex-col">
            <div className="grid h-[1324px] grid-cols-[825px_817px] grid-rows-[662px_656px] gap-[6px]">
              <div className="relative overflow-hidden bg-[#9ea3aa]">
                <svg width="825" height="662" viewBox="264 158 825 662" className="absolute inset-0">
                  <Ortho x={264} y={158} w={825} h={662} ox={677} oy={489} greenTo={489} redFrom={677} redTo={1089} />
                  <path d="M837 519C868 519 928 575 928 592C928 610 895 618 868 618C830 618 779 605 779 570C779 545 803 519 837 519Z" fill="none" stroke="#000" strokeWidth="1.4" />
                  <AxisL x={336} y={747} lx={[348, 686]} ly={[407, 749]} l1="y" l2="x" />
                </svg>
                <Tag label="Top" active />
              </div>
              <div className="relative overflow-hidden bg-[#9ea3aa]">
                <svg width="817" height="662" viewBox="1095 158 817 662" className="absolute inset-0">
                  <path d={p.minor} stroke="#959aa1" strokeWidth=".7" fill="none" />
                  <path d={p.major} stroke="#7b8086" strokeWidth="1" fill="none" />
                  <line x1="1504.5" y1="489" x2="1886" y2="158" stroke="#5b9058" strokeWidth="1.6" />
                  <line x1="1504.5" y1="489" x2="1912" y2="607" stroke="#8f4c4c" strokeWidth="1.6" />
                  <path d="M1538 543C1538 532 1555 527 1577 527C1605 527 1630 545 1640 560C1648 572 1645 583 1627 583C1605 583 1538 560 1538 543Z" fill="none" stroke="#000" strokeWidth="1.4" />
                  <path d="M1168 702V745L1201 720M1168 745L1222 761" fill="none" stroke="#6e7277" strokeWidth="1.3" />
                  <text x="1178" y="695" fontSize="25" fill="#6a6e73" textAnchor="middle" fontFamily="Liberation Sans">z</text>
                  <text x="1207" y="721" fontSize="25" fill="#6a6e73" textAnchor="middle" fontFamily="Liberation Sans">y</text>
                  <text x="1231" y="764" fontSize="25" fill="#6a6e73" textAnchor="middle" fontFamily="Liberation Sans">x</text>
                </svg>
                <Tag label="Perspective" />
              </div>
              <div className="relative overflow-hidden bg-[#9ea3aa]">
                <svg width="825" height="656" viewBox="264 826 825 656" className="absolute inset-0">
                  <Ortho x={264} y={826} w={825} h={656} ox={677} oy={1154} greenTo={1154} redFrom={677} redTo={1089} />
                  <line x1="779" y1="1154" x2="925" y2="1154" stroke="#000" strokeWidth="2" />
                  <AxisL x={336} y={1411} lx={[348, 1352]} ly={[407, 1411]} l1="z" l2="x" />
                </svg>
                <Tag label="Front" />
              </div>
              <div className="relative overflow-hidden bg-[#9ea3aa]">
                <svg width="817" height="656" viewBox="1095 826 817 656" className="absolute inset-0">
                  <Ortho x={1095} y={826} w={817} h={656} ox={1504} oy={1154} greenTo={1154} redFrom={1504} redTo={1912} />
                  <line x1="1376" y1="1154" x2="1473" y2="1154" stroke="#000" strokeWidth="2" />
                  <AxisL x={1168} y={1411} lx={[1178, 1352]} ly={[1239, 1408]} l1="z" l2="y" />
                </svg>
                <Tag label="Right" />
              </div>
            </div>
            <div className="flex h-[52px] shrink-0 items-center bg-[#f0f0f0] pl-[20px] text-[27px] text-[#808080]">
              <svg width="30" height="28" viewBox="0 0 30 28"><rect x="1" y="1" width="28" height="26" fill="none" stroke="#5b86dc" strokeWidth="1.5" /><path d="M15 1v26M1 14h28" stroke="#5b86dc" strokeWidth="1.5" /><path d="M1 2h28M1 15h28" stroke="#2e62cc" strokeWidth="2.5" strokeDasharray="13 2" /></svg>
              <svg width="30" height="28" viewBox="0 0 30 28" className="ml-[34px]"><rect x="1" y="1" width="28" height="26" fill="none" stroke="#9a9a9a" strokeWidth="1.5" /><rect x="1" y="24" width="28" height="3" fill="#999" /></svg>
              <span className="ml-[28px] h-[28px] w-[2px] bg-[#8a8a8a]" />
              <span className="pr-[41px] pl-[38px]">Perspective</span>
              <span className="h-[28px] w-[2px] bg-[#8a8a8a]" />
              <span className="pr-[40.5px] pl-[38px] text-[#3b6fd8]">Top</span>
              <span className="h-[28px] w-[2px] bg-[#8a8a8a]" />
              <span className="pr-[42px] pl-[37px]">Front</span>
              <span className="h-[28px] w-[2px] bg-[#8a8a8a]" />
              <span className="pr-[43px] pl-[37px]">Right</span>
              <span className="h-[28px] w-[2px] bg-[#8a8a8a]" />
              <span className="pl-[39px] text-[25px]">图纸配置</span>
            </div>
          </div>
          {/* right */}
          <div className="ml-[6px] flex w-[466px] shrink-0 flex-col">
            <div className="mr-[6px] flex h-[40px] shrink-0 items-start justify-between rounded-tr-[14px] bg-[#ededed] pr-[9px] pl-[2px] text-[25px] leading-[28px] text-[#9c9c9c]">
              <span>说明</span>
              <span className="mt-[8px]"><Gear /></span>
            </div>
            <div className="flex min-h-0 flex-1">
              <div className="flex h-[1335px] w-[420px] shrink-0 flex-col bg-[#ebebeb] pt-[18px] pl-[16px]">
                <div className="ml-[2px] flex h-[40px] w-[376px] shrink-0 items-center rounded-[12px] bg-white pr-[15px] pl-[12px] text-[26.5px] text-[#2e2e2e] shadow-[0_1px_2px_#b5b5b5]">
                  <Search size={28} strokeWidth={1.8} color="#333" />
                  <span className="ml-[14px] flex-1">ExportAll</span>
                  <span className="flex h-[26px] w-[26px] items-center justify-center rounded-full bg-[#222]">
                    <svg width="12" height="12" viewBox="0 0 12 12"><path d="M2 2l8 8M10 2l-8 8" stroke="#fff" strokeWidth="2.2" /></svg>
                  </span>
                </div>
                <div className="mt-[14px] flex h-[24px] shrink-0 items-center text-[21.8px] text-[#333]">
                  <span className="mr-[8px] flex h-[24px] w-[24px] items-center justify-center rounded-[5px] bg-[#3b82f6]">
                    <svg width="18" height="18" viewBox="0 0 18 18"><path d="M3 10l4 5 8-12" fill="none" stroke="#fff" strokeWidth="2.6" /></svg>
                  </span>
                  动态帮助 (当指令运行时更新)
                </div>
                <div className="mt-[12px] flex h-[1210px] w-[378px] shrink-0 flex-col">
                  <div className="flex h-[1182px] shrink-0">
                    <div className="w-[350px] shrink-0 overflow-hidden border-b-2 border-[#e0e0e0] bg-white pl-[24px] text-[31.5px] leading-[40px] text-[#333]">
                      <div className="h-[78px] w-[302px] border-b-2 border-[#b8b8b8] pt-[5px] text-[54.5px] leading-[60px] font-bold">ExportAll</div>
                      <div className="mt-[12px] w-[520px] border-l-2 border-[#c8c8c8]">
                        <div className="flex h-[50px] items-center bg-[#d8d8d8] pt-[2px] font-bold">
                          <span className="w-[256px] shrink-0 pl-[11px]">工具列</span>
                          <span>功能表</span>
                        </div>
                        <div className="flex h-[122px] border-b-2 border-[#d0d0d0] bg-[#f5f5f5]">
                          <div className="w-[246px] shrink-0 border-r-2 border-[#dcdcdc] pt-[13px] pl-[13px]">
                            <span className="flex h-[40px] w-[40px] items-center justify-center rounded-full border border-[#c4c4c4] bg-[#dcdcdc]">
                              <svg width="22" height="22" viewBox="0 0 22 22"><path d="M3 3l16 16M19 3L3 19" stroke="#fff" strokeWidth="3.4" /></svg>
                            </span>
                            <div className="mt-[18px] -ml-[2px] whitespace-nowrap text-[32px] text-[#4472b4]">不在工具列上。</div>
                          </div>
                          <div className="pl-[10px]">
                            <div className="pt-[5px]">文件</div>
                            <div className="pt-[10px] pl-[40px]">导出</div>
                          </div>
                        </div>
                      </div>
                      <p className="mt-[12px] w-[304px] text-[32px]">ExportAll 指令将全部物件保存到新的Rhino .3dm 文件中。</p>
                      <div className="mt-[20px] w-[291px] border-x-2 border-[#c4c4c4]">
                        <div className="flex h-[50px] items-center border-y-2 border-t-[#b4b4b4] border-b-[#9a9a9a] pl-[11px] font-bold">选项</div>
                        <div className="flex h-[336px] border-b-2 border-[#d0d0d0]">
                          <div className="w-[55px] shrink-0 border-r-2 border-[#c8c8c8] pt-[4px] pl-[11px]">最小化保存</div>
                          <div className="pt-[4px] pr-[16px] pl-[10px]">清除渲染、分析网格虽然可以让文件变小，但下次打开该文件时需要较多的时间重新计算渲染网格。</div>
                        </div>
                        <div className="flex">
                          <div className="w-[55px] shrink-0 border-r-2 border-[#c8c8c8] pt-[4px] pl-[11px]">仅储存几何图形</div>
                          <div className="pt-[4px] pr-[16px] pl-[10px]">
                            仅保存几何图形，不保存<span className="text-[#4472b4]">图层</span>、<span className="text-[#4472b4]">材质</span>、<span className="text-[#4472b4]">属性</span>、<span className="text-[#4472b4]">附注</span>、<span className="text-[#4472b4]">单位</span>设置。类似于导出物件，只会创建一个新文件，而不会成为当前打开的 Rhino 模型。
                          </div>
                        </div>
                      </div>
                    </div>
                    <div className="w-[28px] shrink-0 border-l-2 border-[#e0e0e0] bg-[#fafafa] pt-[786px] pl-[6px]">
                      <div className="h-[122px] w-[16px] rounded-full bg-[#bcbcbc]" />
                    </div>
                  </div>
                  <div className="h-[28px] shrink-0 bg-[#fafafa] pt-[8px] pl-[6px]">
                    <div className="h-[16px] w-[246px] rounded-full bg-[#bcbcbc]" />
                  </div>
                </div>
              </div>
              <div className="relative w-[46px] shrink-0">
                <div className="absolute top-[215px] left-0 h-[74px] w-[40px] rounded-r-[14px] bg-[#ebebeb]" />
                <div className="relative flex flex-col items-center gap-[39px] pt-[18px] pr-[6px]">
                  <svg width="28" height="36" viewBox="0 0 28 36"><Wheel cx={14} cy={18} r={10} w={5.5} /></svg>
                  <svg width="26" height="32" viewBox="0 0 26 32"><path d="M1 2l24 6v10L14 30C8 22 5 12 1 2z" fill="#fff" stroke="#111" strokeWidth="1.5" /><path d="M2 3l23 5-2 6C14 12 8 11 5 10z" fill="#ef8d63" /><path d="M7 14l17 3v3L10 20z" fill="#c9341f" /><path d="M10 22h12l-8 7z" fill="#26408f" /></svg>
                  <svg width="30" height="30" viewBox="0 0 30 30"><rect x="1" y="1" width="28" height="23" fill="url(#gG2)" stroke="#000" strokeWidth="2.5" /><path d="M10 29h10l-2-5h-6z" fill="#000" /></svg>
                  <svg width="30" height="30" viewBox="0 0 30 30" className="mt-[4px]"><rect x="1" y="1" width="28" height="28" fill="#d8dcef" stroke="#222" strokeWidth="1.6" /><rect x="2" y="2" width="26" height="4" fill="#3a4d9e" /><ellipse cx="15" cy="19" rx="12" ry="9" fill="#2a46a6" /><text x="15" y="26" textAnchor="middle" fontFamily="Liberation Serif" fontSize="20" fontWeight="700" fill="#fff">?</text></svg>
                </div>
              </div>
            </div>
          </div>
        </div>
        {/* command */}
        <div className="mt-[6px] ml-[6px] flex h-[82px] shrink-0 flex-col rounded-l-[12px] bg-[#ececec]">
          <div className="flex h-[32px] shrink-0 items-center text-[24.5px] text-[#444]">
            <div className="flex h-[32px] w-[39px] flex-col items-center justify-center gap-[7px] border-r border-[#d0d0d0] pr-[10px]">
              <span className="block h-[6px] w-[6px] rounded-full border border-[#a0a0a0]" />
              <span className="block h-[6px] w-[6px] rounded-full border border-[#a0a0a0]" />
            </div>
            <span className="ml-[11px] flex-1">指令: _ExportAll</span>
            <div className="mr-[14px] flex h-[32px] w-[19px] justify-center bg-white">
              <span className="block h-[26px] w-[15px] rounded-b-full bg-[#bdbdbd]" />
            </div>
          </div>
          <div className="flex h-[50px] shrink-0 items-center whitespace-nowrap pt-[2px] text-[21.5px] text-[#555]">
            <span className="ml-[11px] block h-[23px] w-[23px] border-[5px] border-[#444]" />
            <svg width="30" height="26" viewBox="0 0 30 26" className="ml-[13px]"><path d="M8 4h20M8 13h20M8 22h20" stroke="#555" strokeWidth="3.5" /><path d="M1 4h2M1 13h2M1 22h2" stroke="#555" strokeWidth="3" /></svg>
            <span className="ml-[36px] w-[86px]">工作平面</span>
            <span className="ml-[65px] w-[143px] text-[23px]">x 185.69</span>
            <span className="w-[174px] text-[23px]">y 230.97</span>
            <span className="w-[165px] text-[23px]">z 0</span>
            <span className="w-[129px]">毫米</span>
            <span className="block h-[32px] w-[32px] bg-black" />
            <span className="ml-[15px] w-[189px]">默认</span>
            <span className="w-[124px]">锁定格点</span>
            <span className="w-[79px]">正交</span>
            <span className="w-[108px]">平面模式</span>
            <span className="flex h-[38px] w-[118px] items-center justify-center rounded-[4px] bg-[#fafafa] font-bold text-[#222]">物件锁点</span>
            <span className="ml-[6px] flex h-[38px] w-[118px] items-center justify-center rounded-[4px] bg-[#fafafa] font-bold text-[#222]">智慧轨迹</span>
            <span className="ml-[23px] w-[212px] text-[21.8px]">操作轴 (工作平面)</span>
            <svg width="18" height="28" viewBox="0 0 18 28"><path d="M5 12V6c0-6 8-6 8 0v6" fill="none" stroke="#999" strokeWidth="1.5" /><rect x="1" y="12" width="16" height="15" rx="2" fill="none" stroke="#999" strokeWidth="1.5" /></svg>
            <span className="ml-[22px] w-[271px] text-[21.8px]">自动对齐工作平面 (物件)</span>
            <span className="w-[129px] overflow-hidden text-[23px]">记录建构历史</span>
            <span className="block h-[23px] w-[23px] border-[5px] border-[#444]" />
          </div>
        </div>
      </div>
    </div>
  );
}
